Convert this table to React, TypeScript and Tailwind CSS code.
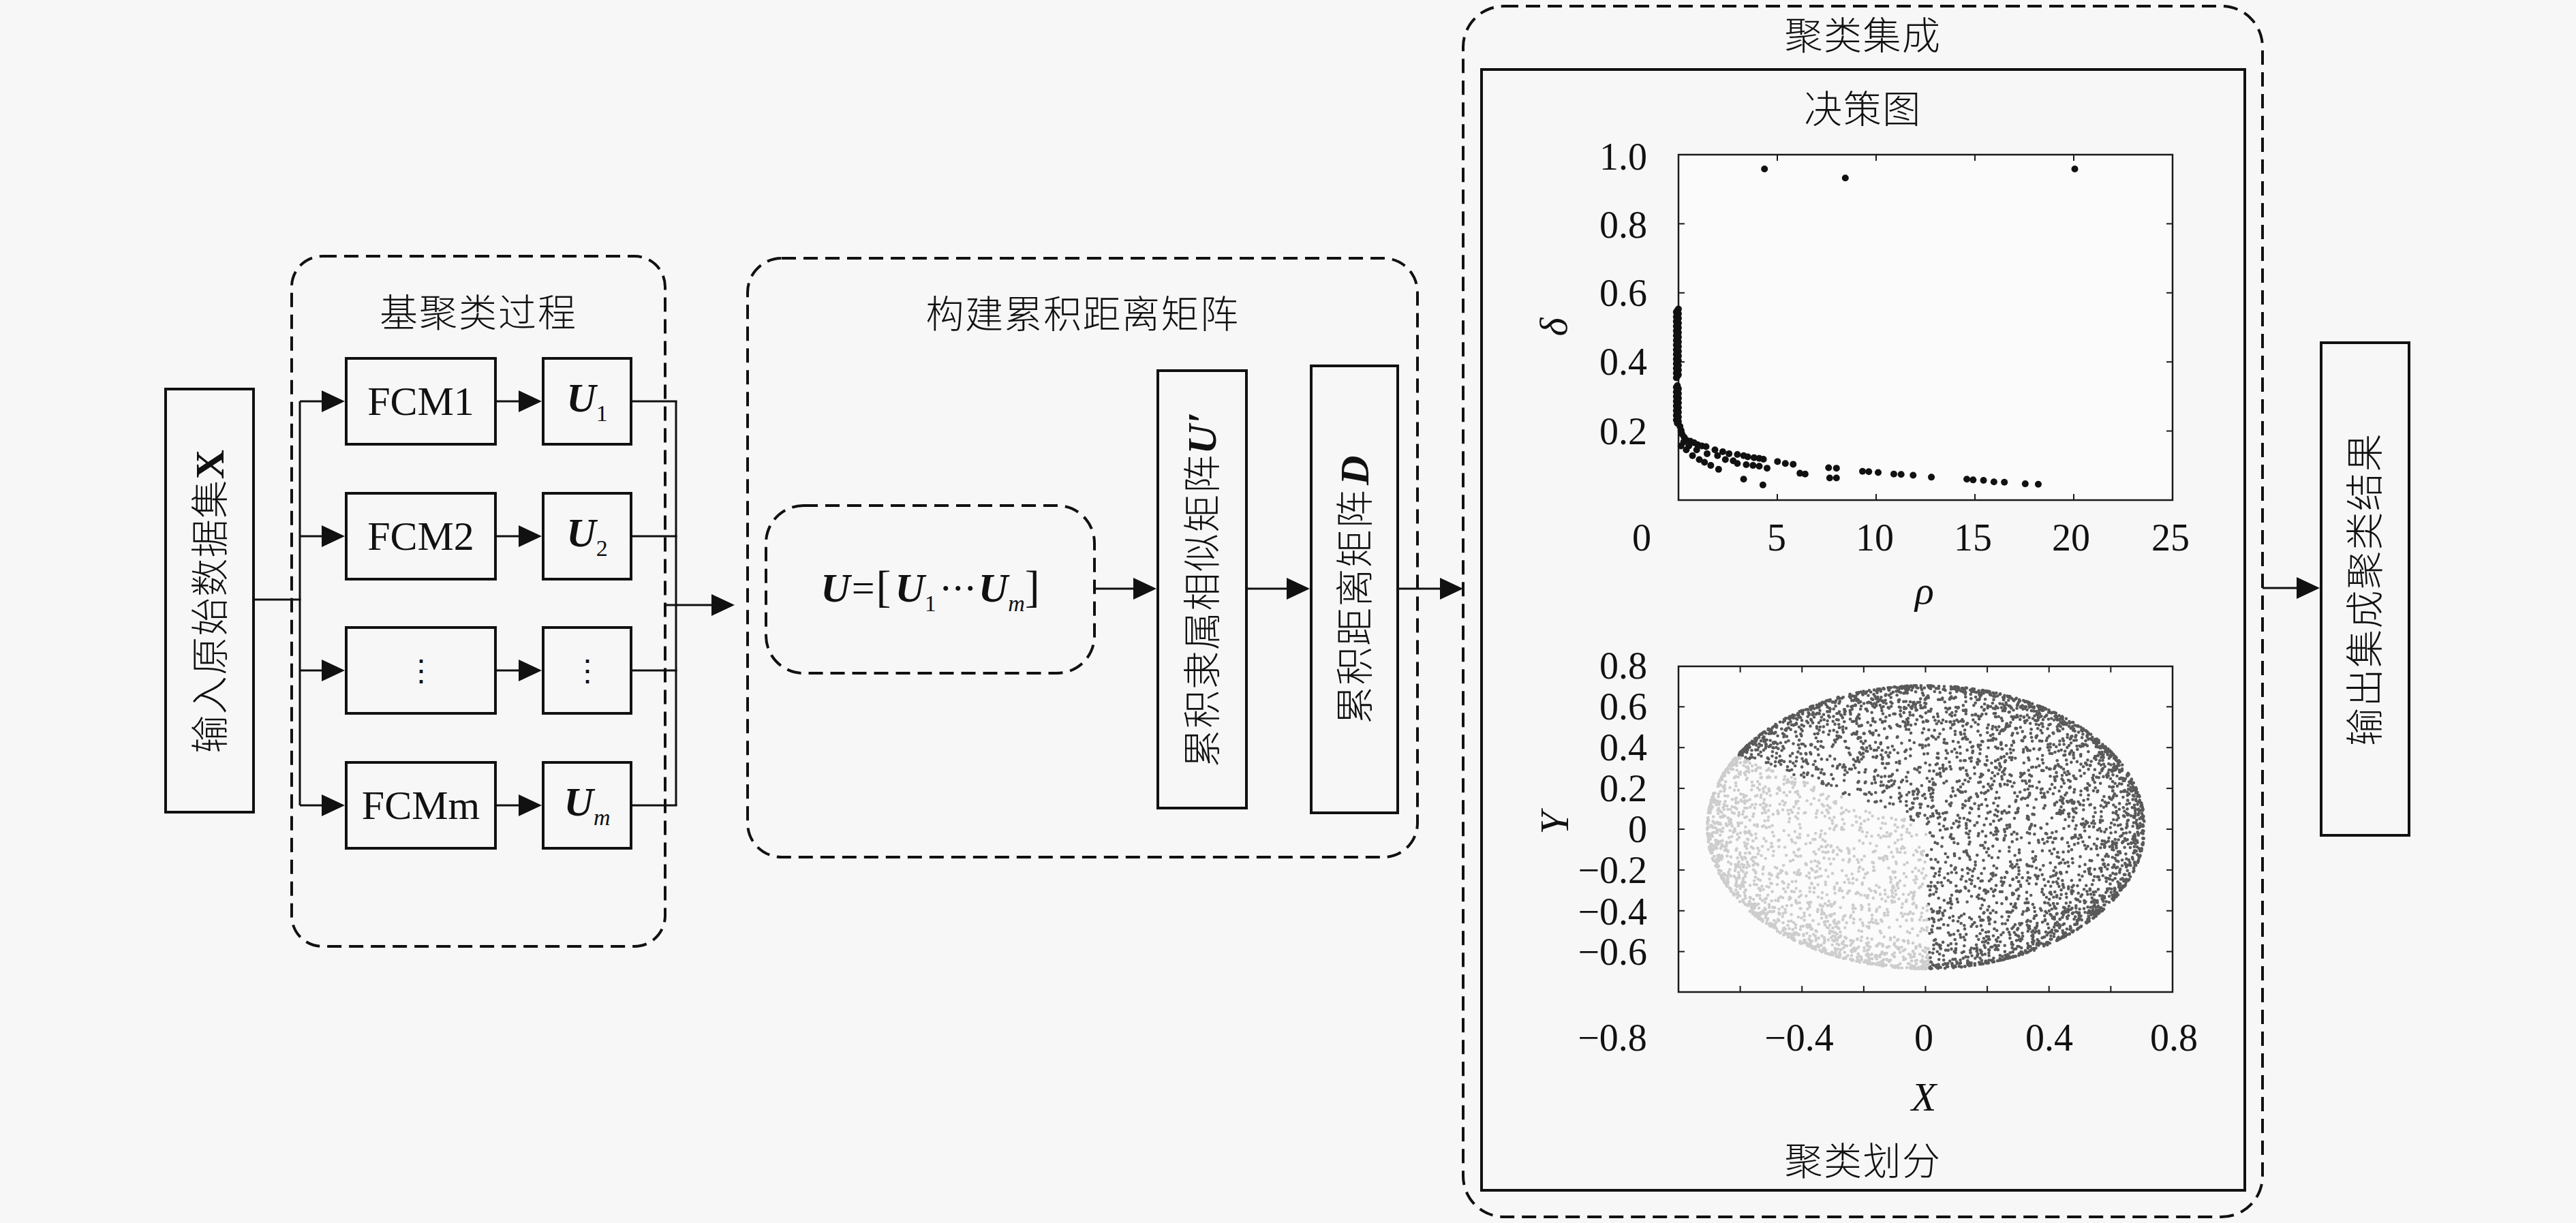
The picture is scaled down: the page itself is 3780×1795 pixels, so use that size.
import React, { useMemo } from "react";

const AL = 34;

function Arrow({ x1, x2, y }: { x1: number; x2: number; y: number }) {
  return (
    <g>
      <line x1={x1} y1={y} x2={x2 - AL + 2} y2={y} stroke="#111" strokeWidth={3} />
      <polygon points={`${x2},${y} ${x2 - AL},${y - 16} ${x2 - AL},${y + 16}`} fill="#111" />
    </g>
  );
}

function DashedFrame({ w, h, r }: { w: number; h: number; r: number }) {
  return (
    <svg className="absolute left-[-4px] top-[-4px] pointer-events-none" width={w} height={h} viewBox={`0 0 ${w} ${h}`}>
      <rect x={2} y={2} width={w - 4} height={h - 4} rx={r} ry={r} fill="none" stroke="#111" strokeWidth={4} strokeDasharray="21 11" />
    </svg>
  );
}

function mulberry32(seed: number) {
  let a = seed;
  return function () {
    a |= 0;
    a = (a + 0x6d2b79f5) | 0;
    let t = Math.imul(a ^ (a >>> 15), 1 | a);
    t = (t + Math.imul(t ^ (t >>> 7), 61 | t)) ^ t;
    return ((t ^ (t >>> 14)) >>> 0) / 4294967296;
  };
}

function USym({ sub }: { sub: string }) {
  return (
    <span className="whitespace-nowrap">
      <span className="font-bold italic text-[60px]">U</span>
      <span className="text-[34px] align-[-14px]">{sub}</span>
    </span>
  );
}

function USymM() {
  return (
    <span className="whitespace-nowrap">
      <span className="font-bold italic text-[60px]">U</span>
      <span className="text-[34px] italic align-[-14px]">m</span>
    </span>
  );
}

const rowTops = [524, 722, 919, 1117];
const rowCenters = rowTops.map((t) => t + 65);

const decZoom: [number, number][] = [
  [600, 432], [755, 455], [1195, 432],
  [438, 1090], [440, 1100], [442, 1110], [446, 1118], [450, 1125], [458, 1128], [465, 1132], [472, 1137],
  [480, 1140], [488, 1142], [505, 1150], [520, 1155], [532, 1160], [548, 1162], [560, 1165], [568, 1168],
  [580, 1170], [590, 1172], [598, 1174], [625, 1180], [640, 1185], [655, 1187], [668, 1210], [678, 1212],
  [723, 1196], [738, 1197], [725, 1222], [738, 1222], [788, 1205], [800, 1206], [818, 1208], [848, 1212],
  [862, 1213], [885, 1215], [920, 1220], [988, 1225], [1000, 1227], [1020, 1228], [1040, 1232], [1060, 1233],
  [1100, 1237], [1125, 1238],
  [440, 1140], [450, 1150], [462, 1165], [475, 1175], [485, 1182], [497, 1190], [512, 1200], [525, 1175],
  [540, 1178], [548, 1185], [565, 1188], [578, 1190], [590, 1192], [605, 1197], [560, 1225], [597, 1240],
  [470, 1150], [490, 1160], [510, 1165], [455, 1140], [445, 1130],
];

const x1 = (v: number) => 2463 + v * 29;
const y1 = (v: number) => 734 - v * 507;
const x2 = (v: number) => 2463 + (v + 0.8) * 453.1;
const y2 = (v: number) => 1217 - v * 299.4;

function DecisionChart() {
  const decPts = useMemo(() => {
    const pts: [number, number][] = decZoom.map(([zx, zy]) => [2130 + zx / 1.3067, zy / 1.742]);
    for (let zy = 790; zy <= 1085; zy += 4) {
      if (zy > 966 && zy < 984) continue;
      pts.push([2130 + (431 + ((zy * 7) % 6)) / 1.3067, zy / 1.742]);
    }
    return pts;
  }, []);
  return (
    <svg className="w-[1116px] h-[711px] shrink-0" viewBox="2176 189 1116 711" fontFamily="'Liberation Serif', serif">
      <rect x={2463} y={227} width={725} height={507} fill="#fbfbfb" stroke="#1a1a1a" strokeWidth={2.5} />
      {[5, 10, 15, 20].map((v) => (
        <g key={`t1x${v}`}>
          <line x1={x1(v)} y1={227} x2={x1(v)} y2={236} stroke="#1a1a1a" strokeWidth={2} />
          <line x1={x1(v)} y1={734} x2={x1(v)} y2={725} stroke="#1a1a1a" strokeWidth={2} />
        </g>
      ))}
      {[0.2, 0.4, 0.6, 0.8].map((v) => (
        <g key={`t1y${v}`}>
          <line x1={2463} y1={y1(v)} x2={2472} y2={y1(v)} stroke="#1a1a1a" strokeWidth={2} />
          <line x1={3188} y1={y1(v)} x2={3179} y2={y1(v)} stroke="#1a1a1a" strokeWidth={2} />
        </g>
      ))}
      {decPts.map(([x, y], i) => (
        <circle key={`d${i}`} cx={x} cy={y} r={5} fill="#111" />
      ))}
      {[
        ["0", 2409],
        ["5", 2607],
        ["10", 2751],
        ["15", 2895],
        ["20", 3039],
        ["25", 3185],
      ].map(([t, x]) => (
        <text key={`l1x${t}`} x={x as number} y={789} fontSize={56} textAnchor="middle" dominantBaseline="central" fill="#111">
          {t}
        </text>
      ))}
      {[
        ["1.0", 230],
        ["0.8", 330],
        ["0.6", 430],
        ["0.4", 531],
        ["0.2", 633],
      ].map(([t, y]) => (
        <text key={`l1y${t}`} x={2417} y={y as number} fontSize={56} textAnchor="end" dominantBaseline="central" fill="#111">
          {t}
        </text>
      ))}
      <text x={2279} y={480} fontSize={58} fontStyle="italic" textAnchor="middle" dominantBaseline="central" transform="rotate(-90 2279 480)" fill="#111">
        δ
      </text>
      <text x={2824} y={866} fontSize={58} fontStyle="italic" textAnchor="middle" dominantBaseline="central" fill="#111">
        ρ
      </text>
    </svg>
  );
}

function PartitionChart() {
  const sphere = useMemo(() => {
    const rnd = mulberry32(12345);
    const cx = 2826;
    const cy = 1214;
    const rx = 321;
    const ry = 208;
    const out: { x: number; y: number; light: boolean }[] = [];
    for (let i = 0; i < 5200; i++) {
      const z = 2 * rnd() - 1;
      const phi = 2 * Math.PI * rnd();
      const s = Math.sqrt(1 - z * z);
      const x = s * Math.cos(phi);
      const y = s * Math.sin(phi);
      const ang = (Math.atan2(y, x) * 180) / Math.PI;
      const light = ang >= 89 || ang <= -150;
      out.push({ x: cx + x * rx, y: cy + y * ry, light });
    }
    return out;
  }, []);
  const ticks2 = [-0.6, -0.4, -0.2, 0, 0.2, 0.4, 0.6];
  return (
    <svg className="w-[1116px] h-[777px] shrink-0" viewBox="2176 900 1116 777" fontFamily="'Liberation Serif', serif">
      <rect x={2463} y={978} width={725} height={478} fill="#fbfbfb" stroke="#1a1a1a" strokeWidth={2.5} />
      {sphere.map((p, i) => (
        <circle key={`s${i}`} cx={p.x} cy={p.y} r={2.3} fill={p.light ? "#cdcdcd" : "#595959"} />
      ))}
      {ticks2.map((v) => (
        <g key={`t2${v}`}>
          <line x1={x2(v)} y1={978} x2={x2(v)} y2={987} stroke="#1a1a1a" strokeWidth={2} />
          <line x1={x2(v)} y1={1456} x2={x2(v)} y2={1447} stroke="#1a1a1a" strokeWidth={2} />
          <line x1={2463} y1={y2(v)} x2={2472} y2={y2(v)} stroke="#1a1a1a" strokeWidth={2} />
          <line x1={3188} y1={y2(v)} x2={3179} y2={y2(v)} stroke="#1a1a1a" strokeWidth={2} />
        </g>
      ))}
      {[
        ["0.8", 977],
        ["0.6", 1037],
        ["0.4", 1097],
        ["0.2", 1157],
        ["0", 1217],
        ["−0.2", 1277],
        ["−0.4", 1338],
        ["−0.6", 1397],
      ].map(([t, y]) => (
        <text key={`l2y${t}`} x={2417} y={y as number} fontSize={56} textAnchor="end" dominantBaseline="central" fill="#111">
          {t}
        </text>
      ))}
      {[
        ["−0.8", 2366],
        ["−0.4", 2640],
        ["0", 2823],
        ["0.4", 3007],
        ["0.8", 3190],
      ].map(([t, x]) => (
        <text key={`l2x${t}`} x={x as number} y={1523} fontSize={56} textAnchor="middle" dominantBaseline="central" fill="#111">
          {t}
        </text>
      ))}
      <text x={2281} y={1208} fontSize={60} fontStyle="italic" textAnchor="middle" dominantBaseline="central" transform="rotate(-90 2281 1208)" fill="#111">
        Y
      </text>
      <text x={2823} y={1610} fontSize={60} fontStyle="italic" textAnchor="middle" dominantBaseline="central" fill="#111">
        X
      </text>
    </svg>
  );
}

function VBox({ className, children }: { className: string; children: React.ReactNode }) {
  return (
    <div className={className}>
      <span className="-rotate-90 whitespace-nowrap text-[56px] leading-none tracking-[1.5px] font-light">{children}</span>
    </div>
  );
}

export default function App() {
  return (
    <div className="relative w-[3780px] h-[1795px] overflow-hidden bg-[#f7f7f7] text-[#111] font-['Liberation_Serif','Noto_Sans_CJK_SC',serif]">
      {/* input */}
      <VBox className="absolute left-[241px] top-[569px] w-[133px] h-[625px] border-[4px] border-[#111] flex items-center justify-center">
        输入原始数据集<span className="font-bold text-[60px]">X</span>
      </VBox>

      {/* group 1: base clustering */}
      <div className="absolute left-[426px] top-[374px] w-[552px] h-[1017px] border-[4px] border-transparent flex flex-col">
        <DashedFrame w={552} h={1017} r={45} />
        <div className="mt-[54px] h-[56px] text-center text-[56px] leading-none tracking-[2px] font-light">基聚类过程</div>
        <div className="mt-[36px] flex flex-col gap-[67.7px] pl-[76px]">
          {[0, 1, 2, 3].map((i) => (
            <div key={`row${i}`} className="flex gap-[66px]">
              <div className="w-[223px] h-[130px] border-[4px] border-[#111] flex items-center justify-center text-[60px] leading-none">
                {i === 0 ? "FCM1" : i === 1 ? "FCM2" : i === 2 ? <span className="font-['DejaVu_Serif',serif] text-[44px]">⋮</span> : "FCMm"}
              </div>
              <div className="w-[133px] h-[130px] border-[4px] border-[#111] flex items-center justify-center leading-none">
                {i === 0 ? <USym sub="1" /> : i === 1 ? <USym sub="2" /> : i === 2 ? <span className="font-['DejaVu_Serif',serif] text-[44px]">⋮</span> : <USymM />}
              </div>
            </div>
          ))}
        </div>
      </div>

      {/* group 2: accumulated distance matrix */}
      <div className="absolute left-[1095px] top-[377px] w-[987px] h-[883px] border-[4px] border-transparent flex flex-col">
        <DashedFrame w={987} h={883} r={50} />
        <div className="mt-[53px] h-[56px] text-center text-[56px] leading-none tracking-[1.5px] font-light">构建累积距离矩阵</div>
        <div className="mt-[45px] h-[660px] flex items-center pl-[23px]">
          <div className="relative w-[486px] h-[250px] flex items-center justify-center text-[60px] leading-none">
            <div className="absolute inset-0">
              <svg className="absolute left-0 top-0 pointer-events-none" width={486} height={250} viewBox="0 0 486 250">
                <rect x={2} y={2} width={482} height={246} rx={55} ry={55} fill="none" stroke="#111" strokeWidth={4} strokeDasharray="21 11" />
              </svg>
            </div>
            <span className="relative whitespace-nowrap">
              <span className="font-bold italic">U</span>
              <span className="mx-[2px]">=</span>
              <span className="text-[66px] mr-[6px]">[</span>
              <USym sub="1" />
              <span className="tracking-[-2px] mx-[4px]">···</span>
              <USymM />
              <span className="text-[66px]">]</span>
            </span>
          </div>
          <VBox className="ml-[89px] w-[134px] h-[646px] border-[4px] border-[#111] flex items-center justify-center">
            累积隶属相似矩阵<span className="font-bold italic text-[60px]">U′</span>
          </VBox>
          <VBox className="ml-[91px] w-[131px] h-[660px] border-[4px] border-[#111] flex items-center justify-center">
            累积距离矩阵<span className="font-bold italic text-[60px] ml-[6px]">D</span>
          </VBox>
        </div>
      </div>

      {/* group 3: ensemble */}
      <div className="absolute left-[2145px] top-[7px] w-[1177px] h-[1781px] border-[4px] border-transparent flex flex-col items-center">
        <DashedFrame w={1177} h={1781} r={60} />
        <div className="mt-[14px] h-[56px] text-center text-[56px] leading-none tracking-[1.5px] font-light">聚类集成</div>
        <div className="mt-[19px] w-[1124px] h-[1649px] border-[4px] border-[#111] flex flex-col items-center">
          <div className="mt-[29px] h-[56px] text-center text-[56px] leading-none tracking-[1.5px] font-light">决策图</div>
          <DecisionChart />
          <PartitionChart />
          <div className="h-[56px] text-center text-[56px] leading-none tracking-[1.5px] font-light">聚类划分</div>
        </div>
      </div>

      {/* output */}
      <VBox className="absolute left-[3404px] top-[501px] w-[133px] h-[727px] border-[4px] border-[#111] flex items-center justify-center">
        输出集成聚类结果
      </VBox>

      {/* connectors */}
      <svg className="absolute left-0 top-0 w-[3780px] h-[1795px] pointer-events-none" viewBox="0 0 3780 1795">
        <line x1={374} y1={880} x2={441.5} y2={880} stroke="#111" strokeWidth={3} />
        <line x1={440} y1={rowCenters[0]} x2={440} y2={rowCenters[3]} stroke="#111" strokeWidth={3} />
        {rowCenters.map((c, i) => (
          <g key={`a${i}`}>
            <Arrow x1={440} x2={506} y={c} />
            <Arrow x1={729} x2={795} y={c} />
            <line x1={928} y1={c} x2={993.5} y2={c} stroke="#111" strokeWidth={3} />
          </g>
        ))}
        <line x1={992} y1={rowCenters[0]} x2={992} y2={rowCenters[3]} stroke="#111" strokeWidth={3} />
        <Arrow x1={976} x2={1078} y={888} />
        <Arrow x1={1608} x2={1697} y={864} />
        <Arrow x1={1831} x2={1922} y={864} />
        <Arrow x1={2053} x2={2147} y={864} />
        <Arrow x1={3320} x2={3404} y={863} />
      </svg>
    </div>
  );
}
